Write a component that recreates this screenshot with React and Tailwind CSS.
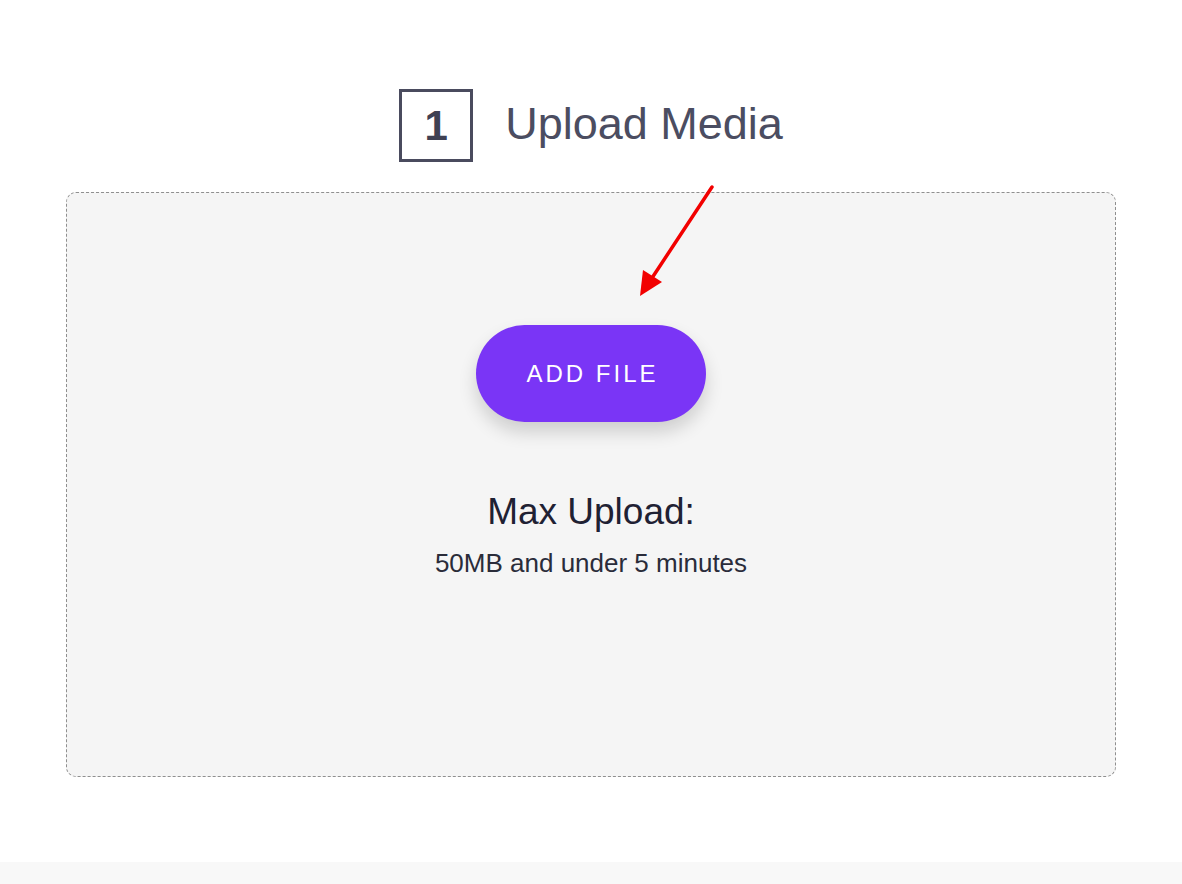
export default function App() {
  return (
    <div
      className="relative min-h-[884px] bg-white flex flex-col"
      style={{ fontFamily: '"Liberation Sans", Arial, sans-serif' }}
    >
      {/* Step heading */}
      <div className="pt-[89px] flex items-center justify-center gap-8">
        <div className="w-[74px] h-[73px] border-[3px] border-[#4a4b5e] flex items-center justify-center">
          <span className="text-[42px] font-bold text-[#3f4052] leading-none">1</span>
        </div>
        <h1 className="text-[45px] text-[#4b4d61] leading-none pb-1">Upload Media</h1>
      </div>

      {/* Drop zone */}
      <div className="mt-[30px] mx-auto w-[1050px] h-[585px] rounded-[10px] border border-dashed border-[#8f8f8f] bg-[#f5f5f5] flex flex-col items-center">
        <button className="mt-[132px] w-[230px] h-[97px] rounded-full bg-[#7a35f6] text-white text-[24px] tracking-[3px] pl-[3px] shadow-[0_10px_18px_rgba(0,0,0,0.16)]">
          ADD FILE
        </button>
        <div className="mt-[71px] text-[37px] text-[#1f2133] leading-none">Max Upload:</div>
        <div className="mt-[20px] text-[26px] text-[#2a2c3a] leading-none">50MB and under 5 minutes</div>
      </div>

      <div className="flex-1" />
      <div className="h-[22px] bg-[#f8f8f8]" />

      {/* Annotation arrow */}
      <svg className="absolute left-0 top-0 pointer-events-none" width="1182" height="884">
        <line x1="712" y1="187" x2="652" y2="278" stroke="#f20000" strokeWidth="3.5" strokeLinecap="round" />
        <polygon points="640,296 643,270 662,282" fill="#f20000" />
      </svg>
    </div>
  );
}
